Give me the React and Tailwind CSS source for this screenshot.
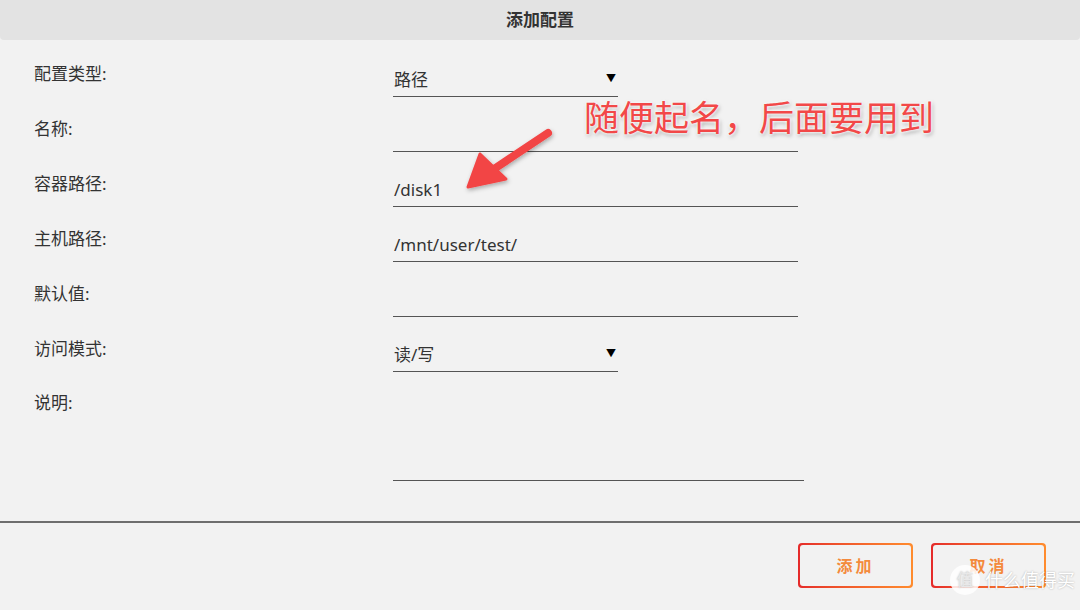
import React from 'react';

const FONT = { fontFamily: '"Noto Sans", "Noto Sans CJK SC", sans-serif' };

// one row of the form: label on the left, underlined field on the right
function Field({ label, value, select }) {
  return (
    <div className="flex items-start">
      <div className="w-[359px] pt-[1px] text-[17px] leading-[24px] text-[#333]">{label}:</div>
      <div
        className={`flex h-[36px] items-center justify-between border-b-[1.5px] border-[#555] pl-[1px] text-[17px] text-[#333] ${
          select ? 'w-[225px]' : 'w-[405px]'
        }`}
      >
        <span className="pt-[2px]">{value}</span>
        {select && <span className="mr-[2px] text-[10px] text-black">▼</span>}
      </div>
    </div>
  );
}

export default function App() {
  return (
    <div className="relative h-[610px] w-[1080px] overflow-hidden bg-[#f2f2f2]" style={FONT}>
      {/* Header */}
      <div className="flex h-[40px] items-center justify-center rounded-b-[4px] bg-[#e3e3e3]">
        <h1 className="text-[17px] font-bold text-[#333]">添加配置</h1>
      </div>

      {/* Form */}
      <div className="flex flex-col gap-[19px] pl-[34px] pt-[21px]">
        <Field label="配置类型" value="路径" select />
        <Field label="名称" value="" />
        <Field label="容器路径" value="/disk1" />
        <Field label="主机路径" value="/mnt/user/test/" />
        <Field label="默认值" value="" />
        <Field label="访问模式" value="读/写" select />
        <div className="flex items-start">
          <div className="w-[359px] text-[17px] leading-[24px] text-[#333]">说明:</div>
          <div className="h-[90px] w-[411px] border-b-[1.5px] border-[#555]" />
        </div>
      </div>

      {/* Footer */}
      <div className="absolute bottom-0 left-0 right-0 top-[521px] border-t-2 border-[#6e6e6e]">
        <div className="flex justify-end gap-[18px] pr-[34px] pt-[20px]">
          {['添加', '取消'].map((t) => (
            <div key={t} className="h-[45px] w-[115px] rounded-[4px] bg-gradient-to-r from-[#e52a2a] to-[#ff8c2e] p-[2px]">
              <div className="flex h-full w-full items-center justify-center rounded-[3px] bg-[#f2f2f2] text-[16px] font-bold tracking-[3px] text-[#f48a3c]">
                {t}
              </div>
            </div>
          ))}
        </div>
      </div>

      {/* Annotation */}
      <div className="absolute left-[584px] top-[94px] whitespace-nowrap text-[35px] leading-[48px] text-[#f24848] [text-shadow:0_0_3px_#fff,0_0_3px_#fff,1px_2px_4px_rgba(0,0,0,0.35)]">
        随便起名，后面要用到
      </div>
      <svg className="absolute left-[460px] top-[124px]" width="100" height="72" viewBox="0 0 100 72">
        <defs>
          <filter id="sh" x="-20%" y="-20%" width="140%" height="140%">
            <feDropShadow dx="1" dy="2" stdDeviation="2" floodColor="#000" floodOpacity="0.3" />
          </filter>
        </defs>
        <g filter="url(#sh)">
          <line x1="88" y1="9" x2="34" y2="45" stroke="#f24545" strokeWidth="8" strokeLinecap="round" />
          <polygon points="8,63 20,30 46,55" fill="#f24545" strokeLinejoin="round" stroke="#f24545" strokeWidth="3" />
        </g>
      </svg>

      {/* Watermark */}
      <div className="absolute left-[950px] top-[565px] flex items-center gap-[5px] whitespace-nowrap text-white [text-shadow:0_0_2px_rgba(0,0,0,0.3)]">
        <div className="flex h-[30px] w-[30px] items-center justify-center rounded-full bg-white/85 text-[17px] text-[#e8e8e8]">
          值
        </div>
        <span className="text-[18px] leading-[30px]">什么值得买</span>
      </div>
    </div>
  );
}
